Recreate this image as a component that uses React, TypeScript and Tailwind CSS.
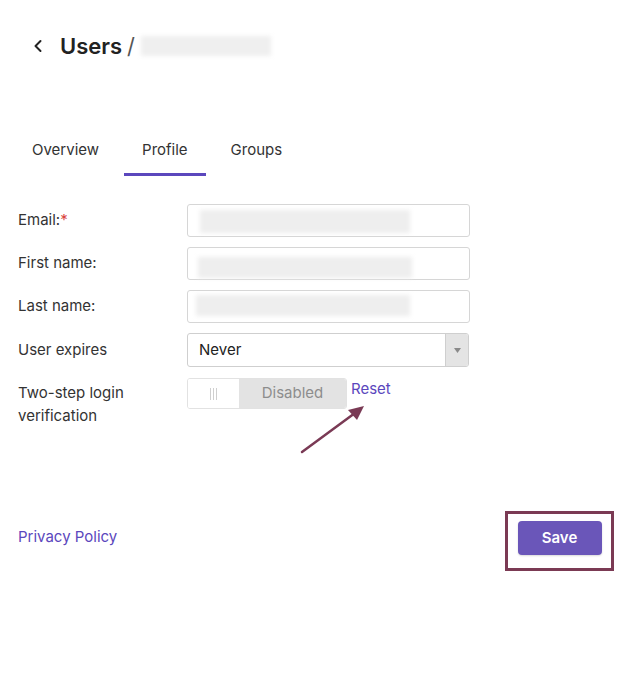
import React from 'react';

function Blur({ className }: { className: string }) {
  return <div className={`absolute bg-[#eeeeee] blur-[2px] ${className}`} />;
}

function TextRow({ label, required, blur }: { label: string; required?: boolean; blur: string }) {
  return (
    <div className="flex items-center h-[33px]">
      <div className="w-[169px] text-[15px] text-[#333]">
        {label}
        {required && <span className="text-[#d9453d]">*</span>}
      </div>
      <div className="relative w-[283px] h-[33px] rounded-[3px] border border-[#d6d6d6] bg-white">
        <Blur className={blur} />
      </div>
    </div>
  );
}

export default function App() {
  const tabs = ['Overview', 'Profile', 'Groups'];
  return (
    <div className="relative w-[634px] h-[680px] bg-white font-['Inter',sans-serif] text-[#333]">
      {/* Header */}
      <div className="flex items-center pt-[33px] pl-[33px] h-[59px]">
        <svg width="10" height="14" viewBox="0 0 10 14" className="mr-[17px]">
          <path d="M7.5 2 L2.5 7 L7.5 12" fill="none" stroke="#222" strokeWidth="2" strokeLinecap="round" strokeLinejoin="round" />
        </svg>
        <span className="text-[22px] leading-[26px] font-semibold text-[#222]">Users</span>
        <span className="text-[22px] leading-[26px] text-[#555] ml-[5px]">/</span>
        <div className="ml-[6px] w-[130px] h-[20px] bg-[#efefef] blur-[2px]" />
      </div>

      {/* Tabs */}
      <div className="flex gap-[7px] pl-[14px] mt-[82px]">
        {tabs.map(t => (
          <div key={t} className="flex flex-col items-center">
            <div className="px-[18px] pt-0 pb-[14px] text-[15px] leading-[18px] text-[#333]">{t}</div>
            <div className={`h-[3px] w-full ${t === 'Profile' ? 'bg-[#5b47bd]' : 'bg-transparent'}`} />
          </div>
        ))}
      </div>

      {/* Form */}
      <div className="flex flex-col gap-[10px] pl-[18px] mt-[28px]">
        <TextRow label="Email:" required blur="left-[12px] top-[5px] w-[210px] h-[23px]" />
        <TextRow label="First name:" blur="left-[10px] top-[9px] w-[214px] h-[21px]" />
        <TextRow label="Last name:" blur="left-[8px] top-[4px] w-[214px] h-[21px]" />
        <div className="flex items-center h-[34px]">
          <div className="w-[169px] text-[15px] text-[#333]">User expires</div>
          <div className="flex w-[282px] h-[34px] rounded-[3px] border border-[#cfcfcf] bg-white overflow-hidden">
            <div className="flex-1 flex items-center pl-[11px] text-[15px] text-[#222]">Never</div>
            <div className="w-[23px] flex items-center justify-center bg-[#e4e4e4] border-l border-[#cfcfcf]">
              <svg width="7" height="5" viewBox="0 0 7 5">
                <path d="M0 0 H7 L3.5 5 Z" fill="#8a8a8a" />
              </svg>
            </div>
          </div>
        </div>
        <div className="flex items-start pt-[1px]">
          <div className="w-[169px] text-[15px] leading-[23px] text-[#333] pt-[3px]">
            Two-step login
            <br />
            verification
          </div>
          <div className="flex h-[31px] rounded-[3px] border border-[#e2e2e2] overflow-hidden">
            <div className="w-[51px] flex items-center justify-center bg-white">
              <div className="flex gap-[2px] h-[12px]">
                <div className="w-px bg-[#cfcfcf]" />
                <div className="w-px bg-[#cfcfcf]" />
                <div className="w-px bg-[#cfcfcf]" />
              </div>
            </div>
            <div className="w-[107px] flex items-center justify-center bg-[#e3e3e3] text-[15px] text-[#8d8d8d]">Disabled</div>
          </div>
          <a className="ml-[4px] text-[15px] leading-[23px] text-[#5b47bd] -mt-[1px]">Reset</a>
        </div>
      </div>

      {/* Footer */}
      <div className="flex items-start justify-between pl-[18px] pr-[20px] mt-[84px]">
        <a className="mt-[17px] text-[15px] leading-[18px] text-[#5b47bd]">Privacy Policy</a>
        <div className="w-[109px] h-[60px] border-[3px] border-[#7b3a54] flex justify-center pt-[7px]">
          <button className="w-[84px] h-[34px] rounded-[4px] bg-[#6a56b9] text-white text-[15px] font-semibold shadow-[0_1px_2px_rgba(0,0,0,0.15)]">
            Save
          </button>
        </div>
      </div>

      {/* Annotation arrow */}
      <svg className="absolute left-0 top-0 pointer-events-none" width="634" height="680">
        <line x1="302" y1="452" x2="355" y2="413" stroke="#7a3a55" strokeWidth="2.5" strokeLinecap="round" />
        <path d="M364 406 L348 410 L357 420 Z" fill="#7a3a55" />
      </svg>
    </div>
  );
}
